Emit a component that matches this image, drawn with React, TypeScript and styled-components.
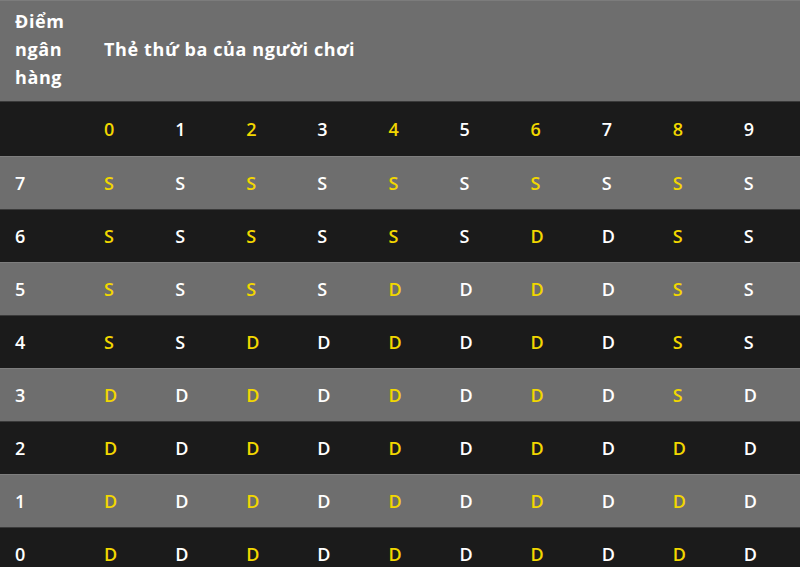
import * as React from 'react';
import styled, { createGlobalStyle } from 'styled-components';

const GlobalStyle = createGlobalStyle`
    html, body {
        margin: 0;
        padding: 0;
        background: #1b1b1b;
    }
    body {
        font-family: "Open Sans", "Noto Sans", sans-serif;
    }
`;

const cards = ['0', '1', '2', '3', '4', '5', '6', '7', '8', '9'];

const rows: Array<[string, string]> = [
    ['7', 'SSSSSSSSSS'],
    ['6', 'SSSSSSDDSS'],
    ['5', 'SSSSDDDDSS'],
    ['4', 'SSDDDDDDSS'],
    ['3', 'DDDDDDDDSD'],
    ['2', 'DDDDDDDDDD'],
    ['1', 'DDDDDDDDDD'],
    ['0', 'DDDDDDDDDD']
];

export default function App(): JSX.Element {
    return <>
        <GlobalStyle />
        <Table>
            <colgroup>
                <col style={{ width: 89 }} />
                {cards.map(c => <col key={c} style={{ width: 71 }} />)}
            </colgroup>
            <Head>
                <HeadLine>
                    <HeadCell>Điểm ngân hàng</HeadCell>
                    <HeadCell colSpan={10}>Thẻ thứ ba của người chơi</HeadCell>
                </HeadLine>
            </Head>
            <Body>
                <Line $dark $tall>
                    <Cell />
                    {cards.map((c, i) => <Cell key={c} $yellow={i % 2 === 0}>{c}</Cell>)}
                </Line>
                {rows.map(([score, marks], r) => <Line key={score} $dark={r % 2 === 1}>
                    <Cell>{score}</Cell>
                    {marks.split('').map((m, i) => <Cell key={i} $yellow={i % 2 === 0}>{m}</Cell>)}
                </Line>)}
            </Body>
        </Table>
    </>;
}

const Table = styled.table`
    width: 800px;
    table-layout: fixed;
    border-collapse: collapse;
    border-spacing: 0;
    color: #ffffff;
    font-size: 17px;
`;

const Head = styled.thead``;

const Body = styled.tbody``;

const HeadLine = styled.tr`
    height: 101px;
    background: #6e6e6e;
    border-top: 1px solid #7c7c7c;
`;

const HeadCell = styled.th`
    padding: 0 12px 5px 15px;
    text-align: left;
    vertical-align: middle;
    font-size: 18px;
    font-weight: 700;
    line-height: 28px;
    letter-spacing: 0.6px;
`;

const Line = styled.tr<{ $dark?: boolean; $tall?: boolean }>`
    height: ${p => (p.$tall ? 55 : 53)}px;
    background: ${p => (p.$dark ? '#1b1b1b' : '#6e6e6e')};
    border-top: 1px solid ${p => (p.$dark ? '#3a3a3a' : '#7e7e7e')};
`;

const Cell = styled.td<{ $yellow?: boolean }>`
    padding: 0 15px;
    text-align: left;
    vertical-align: middle;
    font-size: 18px;
    font-weight: 600;
    color: ${p => (p.$yellow ? '#f2d700' : '#ffffff')};
`;
